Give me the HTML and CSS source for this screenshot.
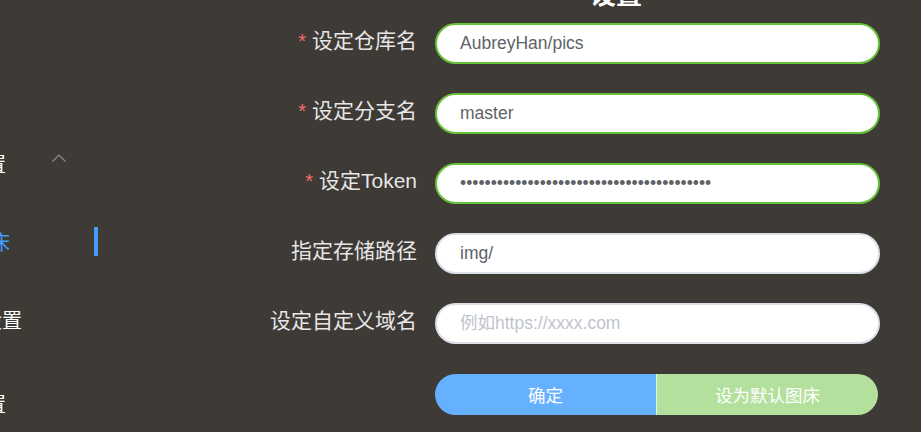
FILE: index.html
```html
<!DOCTYPE html>
<html lang="zh-CN">
<head>
<meta charset="utf-8">
<title>设置</title>
<link rel="stylesheet" href="styles.css">
</head>
<body>
<div class="app">
  <aside class="sidebar">
    <div class="menu-item submenu-title">
      <span class="item-text t1">图床设置</span>
      <svg class="arrow" width="14" height="8" viewBox="0 0 14 8"><polyline points="0.5,7.5 7,1 13.5,7.5" fill="none" stroke="#8c8c8c" stroke-width="1.2"/></svg>
    </div>
    <div class="menu-item active">
      <span class="item-text t2">GitHub图床</span>
    </div>
    <div class="menu-item">
      <span class="item-text t3">PicGo设置</span>
    </div>
    <div class="menu-item last">
      <span class="item-text t1">插件设置</span>
    </div>
  </aside>
  <main class="main">
    <h1 class="title">设置</h1>
    <form class="form">
      <label class="label required">设定仓库名</label>
      <input class="input ok" type="text" value="AubreyHan/pics">
      <label class="label required">设定分支名</label>
      <input class="input ok" type="text" value="master">
      <label class="label required">设定Token</label>
      <input class="input ok" type="password" value="ghp_xxxxxxxxxxxxxxxxxxxxxxxxxxxxxxxxxxxxx">
      <label class="label">指定存储路径</label>
      <input class="input" type="text" value="img/">
      <label class="label">设定自定义域名</label>
      <input class="input" type="text" placeholder="例如https://xxxx.com">
      <div class="btn-group">
        <button type="button" class="btn primary">确定</button>
        <button type="button" class="btn success">设为默认图床</button>
      </div>
    </form>
  </main>
</div>
</body>
</html>
```

FILE: styles.css
```css
html, body {
  margin: 0;
  padding: 0;
  height: 432px;
  overflow: hidden;
  background: #3e3a36;
}

.app {
  display: flex;
  height: 432px;
}

.sidebar {
  width: 198px;
  margin-left: -100px;
  flex-shrink: 0;
  padding-top: 149px;
  box-sizing: border-box;
  display: flex;
  flex-direction: column;
}

.menu-item {
  height: 30px;
  display: flex;
  align-items: center;
  font-family: "Noto Sans CJK SC", sans-serif;
  font-size: 20px;
  color: #ffffff;
  margin-bottom: 49px;
  box-sizing: border-box;
}

.menu-item.active {
  height: 31px;
  margin-top: 0;
  color: #409eff;
  border-right: 4px solid #409eff;
}

.menu-item.last {
  margin-top: 6px;
}

.item-text {
  text-align: right;
  white-space: nowrap;
  display: block;
}

.t1 { width: 106px; }
.t2 { width: 110px; }
.t3 { width: 122px; }

.arrow {
  margin-left: 46px;
  margin-top: -12px;
}

.main {
  flex: 1;
  padding-left: 158px;
}

.title {
  margin: -20px 0 17px 334px;
  font-family: "Noto Sans CJK SC", sans-serif;
  font-size: 26px;
  line-height: 26px;
  height: 26px;
  font-weight: bold;
  color: #ffffff;
}

.form {
  display: grid;
  grid-template-columns: 160px 445px;
  column-gap: 19px;
  row-gap: 29px;
  align-items: center;
}

.label {
  justify-self: end;
  margin-right: -1px;
  margin-bottom: 10px;
  font-family: "Liberation Sans", "Noto Sans CJK SC", sans-serif;
  font-size: 21px;
  color: #e6e6e6;
  white-space: nowrap;
}

.label.required::before {
  content: "*";
  color: #f56c6c;
  margin-right: 6px;
  font-size: 20px;
}

.input {
  height: 41px;
  box-sizing: border-box;
  border: 2px solid #dcdfe6;
  border-radius: 21px;
  background: #ffffff;
  padding: 0 20px 0 23px;
  font-family: "Liberation Sans", "Noto Sans CJK SC", sans-serif;
  font-size: 17.5px;
  color: #606266;
  outline: none;
  width: 445px;
}

.input.ok {
  border-color: #67c23a;
}

.input::placeholder {
  color: #c0c4cc;
}

.btn-group {
  grid-column: 2;
  display: flex;
  width: 443px;
  height: 41px;
  margin-top: 1px;
}

.btn {
  flex: 1;
  border: none;
  height: 41px;
  font-family: "Noto Sans CJK SC", sans-serif;
  font-size: 17.5px;
  color: #ffffff;
  cursor: pointer;
  padding: 0;
}

.btn.primary {
  background: #66b1ff;
  border-radius: 21px 0 0 21px;
}

.btn.success {
  background: #b3e19d;
  border-left: 1px solid #e1f3d8;
  border-radius: 0 21px 21px 0;
}
```
